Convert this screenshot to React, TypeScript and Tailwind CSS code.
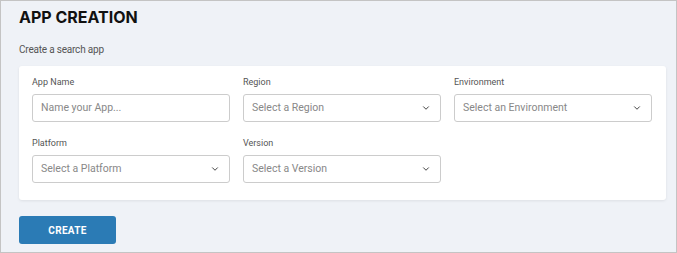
import { ChevronDown } from "lucide-react";

const fields = [
  { label: "App Name", placeholder: "Name your App...", select: false },
  { label: "Region", placeholder: "Select a Region", select: true },
  { label: "Environment", placeholder: "Select an Environment", select: true },
  { label: "Platform", placeholder: "Select a Platform", select: true },
  { label: "Version", placeholder: "Select a Version", select: true },
];

export default function App() {
  return (
    <div className="w-[677px] h-[253px] border border-[#c4c4c4] bg-[#eff2f7] pl-[18px] pr-[10px] pt-[5px] font-['Roboto',sans-serif]">
      {/* Header */}
      <h1 className="font-['Inter',sans-serif] text-[16px] leading-[22px] font-bold text-[#111]">
        APP CREATION
      </h1>
      <p className="mt-[15px] text-[10px] leading-[14px] text-[#555] tracking-[-0.2px]">Create a search app</p>

      {/* Form card */}
      <div className="mt-[9px] bg-white rounded-[3px] shadow-[0_1px_3px_rgba(0,0,0,0.08)] pl-[13px] pr-[14px] pt-[10px] pb-[17px]">
        <div className="grid grid-cols-3 gap-x-[13px] gap-y-[15px]">
          {fields.map((f) => (
            <div key={f.label} className="flex flex-col">
              <label className="text-[9px] leading-[12px] text-[#555] mb-[6px]">{f.label}</label>
              <div className="h-[28px] border border-[#ccc] rounded-[3px] flex items-center justify-between pl-[8px] pr-[9px]">
                <span className="text-[10.5px] text-[#888]">{f.placeholder}</span>
                {f.select && <ChevronDown size={10} strokeWidth={2.4} className="text-[#444]" />}
              </div>
            </div>
          ))}
        </div>
      </div>

      <button className="mt-[16px] w-[97px] h-[28px] rounded-[3px] bg-[#2b7bb5] text-white text-[10px] font-bold tracking-[0.3px]">
        CREATE
      </button>
    </div>
  );
}
